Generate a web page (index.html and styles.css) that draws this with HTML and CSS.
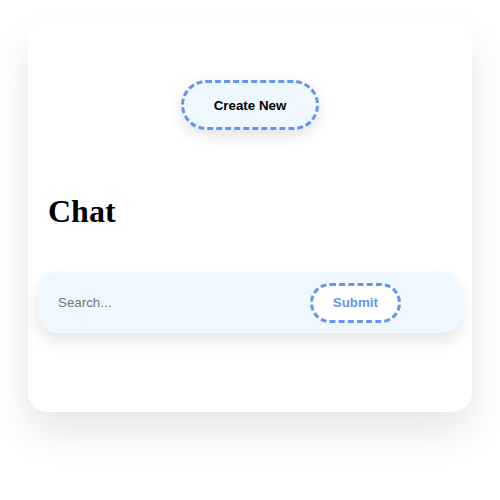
FILE: index.html
```html
<!DOCTYPE html>
<html>
<head>
<meta charset="utf-8">
<link rel="stylesheet" href="styles.css">
</head>
<body>
<div class="card">
  <div class="top">
    <button class="create">Create New</button>
  </div>
  <h1 class="title">Chat</h1>
  <form class="search">
    <input class="search-input" type="text" placeholder="Search...">
    <button type="button" class="submit">Submit</button>
  </form>
</div>
</body>
</html>
```
FILE: styles.css
```css
html, body {
  margin: 0;
  padding: 0;
  background: #ffffff;
}
body {
  padding: 22px 28px 0;
  min-height: 500px;
  box-sizing: border-box;
}
.card {
  display: flex;
  flex-direction: column;
  background: #ffffff;
  border-radius: 20px;
  box-shadow: 0 20px 40px rgba(0, 0, 0, 0.1);
  padding: 0 10px 79px;
}
.top {
  display: flex;
  justify-content: center;
  margin-top: 58px;
}
.create {
  font-family: "Liberation Sans", Arial, sans-serif;
  font-size: 13.333px;
  font-weight: bold;
  color: #000;
  background: #f0f8ff;
  border: 3px dashed #6495ed;
  border-radius: 25px;
  height: 50px;
  padding: 0 30px;
  box-shadow: 0 5px 15px rgba(0, 0, 0, 0.12);
}
.title {
  font-family: "Liberation Serif", "Times New Roman", serif;
  font-size: 32px;
  font-weight: bold;
  margin: 63px 0 42px;
  padding: 0 10px;
}
.search {
  display: flex;
  align-items: center;
  gap: 10px;
  height: 61px;
  box-sizing: border-box;
  padding: 0 61px 0 20px;
  background: #f0f8ff;
  border-radius: 20px;
  box-shadow: 0 8px 16px rgba(0, 0, 0, 0.1);
  margin: 0;
}
.search-input {
  flex: 1;
  min-width: 0;
  border: none;
  outline: none;
  background: transparent;
  font-family: "Liberation Sans", Arial, sans-serif;
  font-size: 13.333px;
  padding: 0;
  color: #333;
}
.search-input::placeholder {
  color: #757575;
}
.submit {
  font-family: "Liberation Sans", Arial, sans-serif;
  font-size: 13.333px;
  font-weight: bold;
  color: #6495ed;
  background: #ffffff;
  border: 3px dashed #6495ed;
  border-radius: 20px;
  height: 40px;
  padding: 0 20px;
}
```
